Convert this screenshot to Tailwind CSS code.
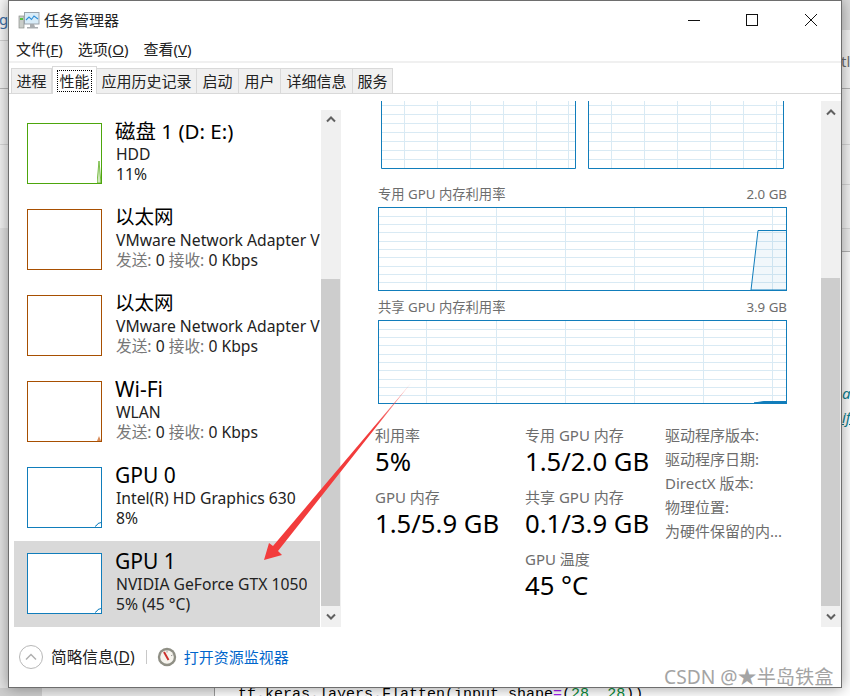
<!DOCTYPE html>
<html lang="zh">
<head>
  <meta charset="UTF-8" />
  <title>任务管理器</title>
  <script src="https://cdn.jsdelivr.net/npm/@tailwindcss/browser@4"></script>
</head>
<body class="m-0">
<div class="relative w-[850px] h-[696px] overflow-hidden bg-[#e4e4e4] font-['Noto_Sans','Noto_Sans_CJK_SC',sans-serif] text-black">

  <!-- BEHIND THE WINDOW -->
  <div class="absolute left-0 top-0 w-[9px] h-[228px] bg-[#f3f3f3]">
    <div class="h-[40px] bg-[#f8f8f8] text-[15px] leading-[38px] text-[#3b6ea5] pl-0 overflow-hidden"><span class="ml-[-1px]">g</span></div>
    <div class="h-[48px] border-t border-[#d2d2d2]"></div>
    <div class="h-[56px] border-t border-[#b9b9b9]"></div>
    <div class="border-t border-[#d8d8d8]"></div>
  </div>
  <div class="absolute left-[842px] top-0 w-[8px] h-[696px] bg-white overflow-hidden">
    <div class="h-[30px] bg-[#dcdcdc]"></div>
    <div class="h-[58px] bg-[#f4f4f4] text-[15px] leading-[62px] text-[#6d6d6d]"><span class="ml-[-1px]">tl</span></div>
    <div class="h-[56px] border-t border-[#b5b5b5] bg-[#f4f4f4]"></div>
    <div class="h-[40px] border-t border-[#d8d8d8] bg-[#f4f4f4]"></div>
    <div class="h-[44px] border-t border-[#d8d8d8] bg-[#f4f4f4]"></div>
    <div class="h-[23px] border-t border-[#d8d8d8] bg-[#eeeeee]"></div>
    <div class="h-[130px] border-t border-[#b5b5b5] bg-white"></div>
    <div class="text-[15px] leading-[24px] italic text-[#0f7f8f]"><div>a</div><div class="underline">if</div></div>
  </div>
  <div class="absolute left-0 top-[688px] w-[850px] h-[8px] flex overflow-hidden">
    <div class="w-[42px] bg-[#cfcfcf]"></div>
    <div class="w-[173px] bg-[#ececec] border-r border-[#9a9a9a]"></div>
    <div class="flex-1 bg-white pl-[23px] font-['Liberation_Mono',monospace] text-[15px] leading-[14px] whitespace-pre">tf.keras.layers.Flatten(input_shape<span class="text-[#a020f0]">=</span>(<span class="text-[#0a8a3a]">28</span>, <span class="text-[#0a8a3a]">28</span>))</div>
  </div>

  <!-- WINDOW -->
  <div class="absolute left-[8px] top-0 w-[834px] h-[688px] border border-[#6e6e6e] bg-white flex flex-col shadow-[0_0_14px_rgba(0,0,0,0.4)]">

    <!-- title bar -->
    <div class="h-[39px] flex items-center shrink-0">
      <svg class="ml-[9px] w-[22px] h-[20px]" viewBox="0 0 22 20">
        <rect x="1" y="5" width="5" height="12" fill="#c9cdc9" stroke="#8a8f8a" stroke-width="0.7"/>
        <rect x="2" y="7" width="3" height="2" fill="#58c23c"/>
        <rect x="6.5" y="1.5" width="14.5" height="11.5" fill="#d8ecf8" stroke="#9aa3ab"/>
        <path d="M8 9 L11 6 L13.5 8.5 L16 5 L20 8" fill="none" stroke="#2f8fd8" stroke-width="1.1"/>
        <path d="M12 13 h4 l1 3 h3 v1.5 h-11 v-1.5 h3 z" fill="#a9adb0"/>
      </svg>
      <div class="ml-[4px] mb-[2px] text-[15px] leading-[20px] text-[#222]">任务管理器</div>
      <div class="ml-auto mb-[2px] flex items-center">
        <svg class="w-[14px] h-[14px] mr-[44px]" viewBox="0 0 14 14"><path d="M1 7.5 H13" stroke="#111" stroke-width="1"/></svg>
        <svg class="w-[14px] h-[14px] mr-[45px]" viewBox="0 0 14 14"><rect x="1.5" y="1.5" width="11" height="11" fill="none" stroke="#111"/></svg>
        <svg class="w-[14px] h-[14px] mr-[23px]" viewBox="0 0 14 14"><path d="M1 1 L13 13 M13 1 L1 13" stroke="#111" stroke-width="1"/></svg>
      </div>
    </div>

    <!-- menu -->
    <div class="h-[21px] pb-[2px] flex items-center text-[15px] leading-[19px] text-[#222] pl-[7px] gap-[15px] shrink-0">
      <span>文件(<u>F</u>)</span><span>选项(<u>O</u>)</span><span>查看(<u>V</u>)</span>
    </div>
    <div class="h-[2px] bg-[#f0f0f0] shrink-0"></div>

    <!-- tabs -->
    <div class="h-[31px] border-b border-[#d9d9d9] flex items-end pl-[2px] text-[15px] text-[#222] shrink-0">
      <div class="w-[41px] h-[25px] bg-[#f0f0f0] border border-b-0 border-[#d9d9d9] text-center leading-[25px]">进程</div>
      <div class="w-[45px] h-[28px] -mb-px bg-white border border-b-0 border-[#d9d9d9] flex items-center justify-center relative z-10"><span class="border border-dotted border-black leading-[20px] px-px">性能</span></div>
      <div class="w-[100px] h-[25px] bg-[#f0f0f0] border border-b-0 border-l-0 border-[#d9d9d9] text-center leading-[25px]">应用历史记录</div>
      <div class="w-[42px] h-[25px] bg-[#f0f0f0] border border-b-0 border-l-0 border-[#d9d9d9] text-center leading-[25px]">启动</div>
      <div class="w-[42px] h-[25px] bg-[#f0f0f0] border border-b-0 border-l-0 border-[#d9d9d9] text-center leading-[25px]">用户</div>
      <div class="w-[72px] h-[25px] bg-[#f0f0f0] border border-b-0 border-l-0 border-[#d9d9d9] text-center leading-[25px]">详细信息</div>
      <div class="w-[40px] h-[25px] bg-[#f0f0f0] border border-b-0 border-l-0 border-[#d9d9d9] text-center leading-[25px]">服务</div>
    </div>

    <!-- body -->
    <div class="h-[533px] flex shrink-0">

      <!-- left pane -->
      <div class="w-[333px] h-full flex pt-[16px] shrink-0">
        <div class="w-[307px] h-[517px] ml-[5px] pt-[1px] overflow-hidden shrink-0">

          <div class="h-[86px] w-[306px] flex">
            <div class="relative w-[75px] h-[61px] ml-[13px] mt-[12px] border border-[#4da60c] shrink-0 overflow-hidden">
              <svg class="absolute right-0 bottom-0 w-[4px] h-[22px]" viewBox="0 0 4 22"><path d="M0 22 L2 0 L4 22 Z" fill="#cfe8bc" stroke="#4da60c" stroke-width="0.7"/></svg>
            </div>
            <div class="ml-[13px] pt-[8px] whitespace-nowrap overflow-hidden">
              <div class="text-[20.5px] leading-[24px]">磁盘 1 (D: E:)</div>
              <div class="text-[15.7px] leading-[19px] mt-[2px] pl-px text-[#222]">HDD</div>
              <div class="text-[15.7px] leading-[19px] mt-[1px] pl-px text-[#222]">11%</div>
            </div>
          </div>

          <div class="h-[86px] w-[306px] flex">
            <div class="w-[75px] h-[61px] ml-[13px] mt-[12px] border border-[#a74f01] shrink-0"></div>
            <div class="ml-[13px] pt-[8px] whitespace-nowrap overflow-hidden">
              <div class="text-[19.5px] leading-[24px]">以太网</div>
              <div class="text-[15.7px] leading-[19px] mt-[2px] pl-px text-[#222]">VMware Network Adapter V</div>
              <div class="text-[15.7px] leading-[19px] mt-[1px] pl-px text-[#222]"><span class="text-[#777]">发送:</span> 0 <span class="text-[#777]">接收:</span> 0 Kbps</div>
            </div>
          </div>

          <div class="h-[86px] w-[306px] flex">
            <div class="w-[75px] h-[61px] ml-[13px] mt-[12px] border border-[#a74f01] shrink-0"></div>
            <div class="ml-[13px] pt-[8px] whitespace-nowrap overflow-hidden">
              <div class="text-[19.5px] leading-[24px]">以太网</div>
              <div class="text-[15.7px] leading-[19px] mt-[2px] pl-px text-[#222]">VMware Network Adapter V</div>
              <div class="text-[15.7px] leading-[19px] mt-[1px] pl-px text-[#222]"><span class="text-[#777]">发送:</span> 0 <span class="text-[#777]">接收:</span> 0 Kbps</div>
            </div>
          </div>

          <div class="h-[86px] w-[306px] flex">
            <div class="relative w-[75px] h-[61px] ml-[13px] mt-[12px] border border-[#a74f01] shrink-0">
              <svg class="absolute right-0 bottom-0 w-[4px] h-[5px]" viewBox="0 0 4 5"><path d="M0 5 L2 0 L4 5 Z" fill="#d98d5a"/></svg>
            </div>
            <div class="ml-[13px] pt-[8px] whitespace-nowrap overflow-hidden">
              <div class="text-[21px] leading-[24px]">Wi-Fi</div>
              <div class="text-[15.7px] leading-[19px] mt-[2px] pl-px text-[#222]">WLAN</div>
              <div class="text-[15.7px] leading-[19px] mt-[1px] pl-px text-[#222]"><span class="text-[#777]">发送:</span> 0 <span class="text-[#777]">接收:</span> 0 Kbps</div>
            </div>
          </div>

          <div class="h-[86px] w-[306px] flex">
            <div class="relative w-[75px] h-[61px] ml-[13px] mt-[12px] border border-[#117dbb] shrink-0">
              <svg class="absolute right-0 bottom-0 w-[6px] h-[5px]" viewBox="0 0 6 5"><path d="M0 4.5 L2 3 L3 1.5 L6 0.5" fill="none" stroke="#117dbb"/></svg>
            </div>
            <div class="ml-[13px] pt-[8px] whitespace-nowrap overflow-hidden">
              <div class="text-[21px] leading-[24px]">GPU 0</div>
              <div class="text-[15.7px] leading-[19px] mt-[2px] pl-px text-[#222]">Intel(R) HD Graphics 630</div>
              <div class="text-[15.7px] leading-[19px] mt-[1px] pl-px text-[#222]">8%</div>
            </div>
          </div>

          <div class="h-[86px] w-[306px] flex bg-[#d9d9d9]">
            <div class="relative w-[75px] h-[61px] ml-[13px] mt-[12px] border border-[#117dbb] bg-white shrink-0">
              <svg class="absolute right-0 bottom-0 w-[6px] h-[5px]" viewBox="0 0 6 5"><path d="M0 4.5 L2 3 L3 1.5 L6 0.5" fill="none" stroke="#117dbb"/></svg>
            </div>
            <div class="ml-[13px] pt-[8px] whitespace-nowrap overflow-hidden">
              <div class="text-[21px] leading-[24px]">GPU 1</div>
              <div class="text-[15.7px] leading-[19px] mt-[2px] pl-px text-[#222]">NVIDIA GeForce GTX 1050</div>
              <div class="text-[15.7px] leading-[19px] mt-[1px] pl-px text-[#222]">5% (45 °C)</div>
            </div>
          </div>
        </div>

        <!-- left scrollbar -->
        <div class="w-[20px] h-[517px] bg-[#f0f0f0] flex flex-col shrink-0">
          <div class="h-[169px] pt-[6px] flex justify-center shrink-0">
            <svg class="w-[10px] h-[7px]" viewBox="0 0 10 7"><path d="M1 5.5 L5 1.5 L9 5.5" fill="none" stroke="#606060" stroke-width="2"/></svg>
          </div>
          <div class="h-[327px] w-[19px] bg-[#cdcdcd] shrink-0"></div>
          <div class="flex-1 pt-[7px] flex justify-center">
            <svg class="w-[10px] h-[7px]" viewBox="0 0 10 7"><path d="M1 1.5 L5 5.5 L9 1.5" fill="none" stroke="#606060" stroke-width="2"/></svg>
          </div>
        </div>
      </div>

      <!-- right pane -->
      <div class="flex-1 h-full flex pt-[7px] min-w-0">
        <div class="w-[479px] h-full overflow-hidden shrink-0">

          <!-- clipped charts -->
          <div class="flex pl-[39px] gap-[12px]">
            <svg class="block w-[195px] h-[68px]" viewBox="0 0 195 68">
              <g stroke="#d9eaf4" fill="none">
                <path d="M0 4.5 H195 M0 13.5 H195 M0 22.5 H195 M0 31.5 H195 M0 40.5 H195 M0 49.5 H195 M0 58.5 H195"/>
                <path d="M23.5 0 V68 M56.5 0 V68 M89.5 0 V68 M122.5 0 V68 M155.5 0 V68 M187.5 0 V68"/>
              </g>
              <path d="M0.5 0 V67.5 H194.5 V0" fill="none" stroke="#117dbb"/>
            </svg>
            <svg class="block w-[196px] h-[68px]" viewBox="0 0 196 68">
              <g stroke="#d9eaf4" fill="none">
                <path d="M0 4.5 H196 M0 13.5 H196 M0 22.5 H196 M0 31.5 H196 M0 40.5 H196 M0 49.5 H196 M0 58.5 H196"/>
                <path d="M23.5 0 V68 M56.5 0 V68 M89.5 0 V68 M122.5 0 V68 M155.5 0 V68 M188.5 0 V68"/>
              </g>
              <path d="M0.5 0 V67.5 H195.5 V0" fill="none" stroke="#117dbb"/>
            </svg>
          </div>

          <!-- dedicated memory -->
          <div class="ml-[36px] w-[409px] mt-[14px] h-[24px] pb-[2px] flex justify-between items-center text-[13.3px] leading-[20px] text-[#6d6d6d]">
            <span>专用 GPU 内存利用率</span><span>2.0 GB</span>
          </div>
          <svg class="block ml-[36px] w-[409px] h-[84px]" viewBox="0 0 409 84">
            <g stroke="#d9eaf4" fill="none">
              <path d="M0 9.5 H409 M0 17.5 H409 M0 25.5 H409 M0 34.5 H409 M0 42.5 H409 M0 50.5 H409 M0 59.5 H409 M0 67.5 H409 M0 75.5 H409"/>
              <path d="M48.5 0 V84 M118.5 0 V84 M187.5 0 V84 M256.5 0 V84 M325.5 0 V84 M394.5 0 V84"/>
            </g>
            <path d="M373 83 L380 23.5 H408.5 V83 Z" fill="#117dbb" fill-opacity="0.06" stroke="#117dbb"/>
            <rect x="0.5" y="0.5" width="408" height="83" fill="none" stroke="#117dbb"/>
          </svg>

          <!-- shared memory -->
          <div class="ml-[36px] w-[409px] mt-[5px] h-[24px] pb-[2px] flex justify-between items-center text-[13.3px] leading-[20px] text-[#6d6d6d]">
            <span>共享 GPU 内存利用率</span><span>3.9 GB</span>
          </div>
          <svg class="block ml-[36px] w-[409px] h-[84px]" viewBox="0 0 409 84">
            <g stroke="#d9eaf4" fill="none">
              <path d="M0 9.5 H409 M0 17.5 H409 M0 25.5 H409 M0 34.5 H409 M0 42.5 H409 M0 50.5 H409 M0 59.5 H409 M0 67.5 H409 M0 75.5 H409"/>
              <path d="M48.5 0 V84 M118.5 0 V84 M187.5 0 V84 M256.5 0 V84 M325.5 0 V84 M394.5 0 V84"/>
            </g>
            <path d="M376 83 L386 81.5 H408 V83 Z" fill="#117dbb" stroke="#117dbb"/>
            <rect x="0.5" y="0.5" width="408" height="83" fill="none" stroke="#117dbb"/>
          </svg>

          <!-- stats -->
          <div class="flex pl-[33px] mt-[20px]">
            <div class="w-[150px] shrink-0">
              <div class="h-[62px]">
                <div class="text-[15px] leading-[22px] text-[#6d6d6d]">利用率</div>
                <div class="text-[25.7px] leading-[30px] mt-px">5%</div>
              </div>
              <div class="h-[62px]">
                <div class="text-[15px] leading-[22px] text-[#6d6d6d]">GPU 内存</div>
                <div class="text-[25.7px] leading-[30px] mt-px">1.5/5.9 GB</div>
              </div>
            </div>
            <div class="w-[140px] shrink-0">
              <div class="h-[62px]">
                <div class="text-[15px] leading-[22px] text-[#6d6d6d]">专用 GPU 内存</div>
                <div class="text-[25.7px] leading-[30px] mt-px">1.5/2.0 GB</div>
              </div>
              <div class="h-[62px]">
                <div class="text-[15px] leading-[22px] text-[#6d6d6d]">共享 GPU 内存</div>
                <div class="text-[25.7px] leading-[30px] mt-px">0.1/3.9 GB</div>
              </div>
              <div class="h-[62px]">
                <div class="text-[15px] leading-[22px] text-[#6d6d6d]">GPU 温度</div>
                <div class="text-[25.7px] leading-[30px] mt-px">45 °C</div>
              </div>
            </div>
            <div class="-mt-px text-[15px] leading-[24px] text-[#6d6d6d] whitespace-nowrap">
              <div>驱动程序版本:</div>
              <div>驱动程序日期:</div>
              <div>DirectX 版本:</div>
              <div>物理位置:</div>
              <div>为硬件保留的内...</div>
            </div>
          </div>
        </div>

        <!-- right scrollbar -->
        <div class="w-[20px] h-[526px] bg-[#f0f0f0] flex flex-col shrink-0">
          <div class="h-[177px] pt-[8px] flex justify-center shrink-0">
            <svg class="w-[10px] h-[7px]" viewBox="0 0 10 7"><path d="M1 5.5 L5 1.5 L9 5.5" fill="none" stroke="#606060" stroke-width="2"/></svg>
          </div>
          <div class="h-[328px] w-[19px] bg-[#cdcdcd] shrink-0"></div>
          <div class="flex-1 pt-[7px] flex justify-center">
            <svg class="w-[10px] h-[7px]" viewBox="0 0 10 7"><path d="M1 1.5 L5 5.5 L9 1.5" fill="none" stroke="#606060" stroke-width="2"/></svg>
          </div>
        </div>
      </div>
    </div>

    <!-- footer -->
    <div class="flex-1 flex items-center pl-[10px]">
      <div class="w-[24px] h-[24px] rounded-full border border-[#b8b8b8] flex items-center justify-center shrink-0">
        <svg class="w-[12px] h-[8px]" viewBox="0 0 12 8"><path d="M1 6.5 L6 1.5 L11 6.5" fill="none" stroke="#b0b0b0" stroke-width="1.5"/></svg>
      </div>
      <div class="ml-[8px] text-[15.7px] leading-[20px] text-[#222] whitespace-nowrap">简略信息(<u>D</u>)</div>
      <div class="ml-[11px] w-px h-[14px] bg-[#c8c8c8]"></div>
      <svg class="ml-[10px] w-[20px] h-[20px] shrink-0" viewBox="0 0 20 20">
        <circle cx="10" cy="10" r="9.2" fill="#8f8f85"/>
        <circle cx="10" cy="10" r="6.8" fill="#f6f4ee"/>
        <path d="M7 5 L11.5 13" stroke="#c9302c" stroke-width="2"/>
        <path d="M10 3.5 V5.5 M15.5 8 L14 8.8" stroke="#888" stroke-width="0.8"/>
      </svg>
      <div class="ml-[7px] text-[15px] leading-[20px] text-[#0066cc] whitespace-nowrap">打开资源监视器</div>
    </div>
  </div>

  <!-- red arrow drawn over the shot -->
  <svg class="absolute left-0 top-0 w-[850px] h-[696px] pointer-events-none" viewBox="0 0 850 696">
    <defs>
      <linearGradient id="fade" gradientUnits="userSpaceOnUse" x1="411" y1="383" x2="375" y2="428">
        <stop offset="0" stop-color="#f23c3c" stop-opacity="0.3"/>
        <stop offset="1" stop-color="#f23c3c"/>
      </linearGradient>
    </defs>
    <path d="M411 383 L278 551 L282 555 L264 560 L269 543 L273 546 Z" fill="url(#fade)"/>
  </svg>

  <!-- watermark -->
  <div class="absolute left-[664px] top-[664px] text-[19.2px] leading-[26px] text-[#a4a4a4] whitespace-nowrap [text-shadow:0_0_2px_#fff]">CSDN @★半岛铁盒</div>
</div>
</body>
</html>
